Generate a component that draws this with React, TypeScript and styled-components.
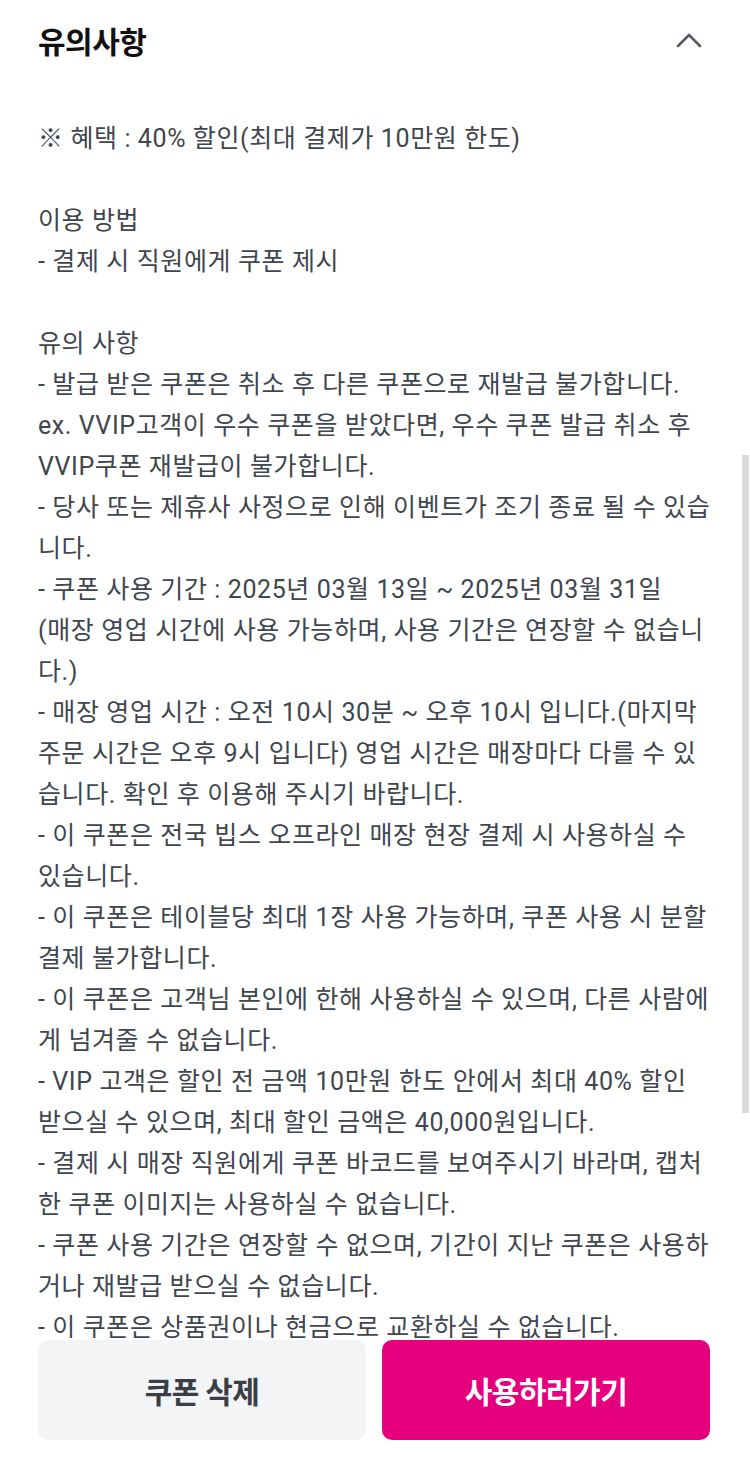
import React from "react";
import styled, { createGlobalStyle } from "styled-components";

const GlobalStyle = createGlobalStyle`
  html, body {
    margin: 0;
    padding: 0;
    background: #ffffff;
  }
  body {
    font-family: Roboto, "Noto Sans CJK KR", "Noto Sans", sans-serif;
    -webkit-font-smoothing: antialiased;
  }
  * {
    box-sizing: border-box;
  }
`;

// 앱 화면의 줄바꿈 위치 그대로
const noticeLines = [
  "※ 혜택 : 40% 할인(최대 결제가 10만원 한도)",
  "",
  "이용 방법",
  "- 결제 시 직원에게 쿠폰 제시",
  "",
  "유의 사항",
  "- 발급 받은 쿠폰은 취소 후 다른 쿠폰으로 재발급 불가합니다.",
  "ex. VVIP고객이 우수 쿠폰을 받았다면, 우수 쿠폰 발급 취소 후",
  "VVIP쿠폰 재발급이 불가합니다.",
  "- 당사 또는 제휴사 사정으로 인해 이벤트가 조기 종료 될 수 있습",
  "니다.",
  "- 쿠폰 사용 기간 : 2025년 03월 13일 ~ 2025년 03월 31일",
  "(매장 영업 시간에 사용 가능하며, 사용 기간은 연장할 수 없습니",
  "다.)",
  "- 매장 영업 시간 : 오전 10시 30분 ~ 오후 10시 입니다.(마지막",
  "주문 시간은 오후 9시 입니다) 영업 시간은 매장마다 다를 수 있",
  "습니다. 확인 후 이용해 주시기 바랍니다.",
  "- 이 쿠폰은 전국 빕스 오프라인 매장 현장 결제 시 사용하실 수",
  "있습니다.",
  "- 이 쿠폰은 테이블당 최대 1장 사용 가능하며, 쿠폰 사용 시 분할",
  "결제 불가합니다.",
  "- 이 쿠폰은 고객님 본인에 한해 사용하실 수 있으며, 다른 사람에",
  "게 넘겨줄 수 없습니다.",
  "- VIP 고객은 할인 전 금액 10만원 한도 안에서 최대 40% 할인",
  "받으실 수 있으며, 최대 할인 금액은 40,000원입니다.",
  "- 결제 시 매장 직원에게 쿠폰 바코드를 보여주시기 바라며, 캡처",
  "한 쿠폰 이미지는 사용하실 수 없습니다.",
  "- 쿠폰 사용 기간은 연장할 수 없으며, 기간이 지난 쿠폰은 사용하",
  "거나 재발급 받으실 수 없습니다.",
  "- 이 쿠폰은 상품권이나 현금으로 교환하실 수 없습니다.",
];

export default function App() {
  return (
    <>
      <GlobalStyle />
      <Page>
        <Header>
          <Title>유의사항</Title>
          <ToggleButton aria-label="접기">
            <svg width="26" height="16" viewBox="0 0 26 16" fill="none">
              <path
                d="M2 14L13 3L24 14"
                stroke="#555b64"
                strokeWidth="2.6"
                strokeLinecap="round"
                strokeLinejoin="round"
              />
            </svg>
          </ToggleButton>
        </Header>
        <NoticeText>{noticeLines.join("\n")}</NoticeText>
      </Page>
      <ScrollThumb />
      <Footer>
        <FooterButton variant="secondary">쿠폰 삭제</FooterButton>
        <FooterButton variant="primary">사용하러가기</FooterButton>
      </Footer>
    </>
  );
}

const Page = styled.main`
  padding: 0 38px 160px 38px;
`;

const Header = styled.div`
  display: flex;
  align-items: center;
  justify-content: space-between;
  height: 80px;
`;

const Title = styled.h2`
  margin: 0;
  color: #111111;
  font-family: "Noto Sans CJK KR", sans-serif;
  font-size: 30px;
  font-weight: 700;
  letter-spacing: -0.5px;
`;

const ToggleButton = styled.button`
  display: flex;
  align-items: center;
  justify-content: center;
  width: 48px;
  height: 48px;
  margin-right: -1px;
  padding: 0;
  border: none;
  background: none;
  cursor: pointer;
`;

const NoticeText = styled.p`
  margin: 0;
  padding-top: 38px;
  color: #40464e;
  font-size: 25px;
  font-weight: 400;
  line-height: 41px;
  letter-spacing: 0.6px;
  white-space: pre;
`;

const ScrollThumb = styled.div`
  position: fixed;
  top: 455px;
  right: 1px;
  width: 7px;
  height: 658px;
  background: #dadada;
`;

const Footer = styled.div`
  position: fixed;
  left: 0;
  right: 0;
  bottom: 0;
  display: grid;
  grid-template-columns: 1fr 1fr;
  gap: 16px;
  padding: 2px 40px 40px 38px;
  background: #ffffff;
`;

const FooterButton = styled.button<{ variant: "primary" | "secondary" }>`
  height: 100px;
  border: none;
  border-radius: 10px;
  background: ${({ variant }) => (variant === "primary" ? "#e5007e" : "#f3f4f6")};
  color: ${({ variant }) => (variant === "primary" ? "#ffffff" : "#3a3f46")};
  font-family: "Noto Sans CJK KR", sans-serif;
  font-size: 30px;
  font-weight: 700;
  letter-spacing: -0.5px;
  cursor: pointer;
`;
